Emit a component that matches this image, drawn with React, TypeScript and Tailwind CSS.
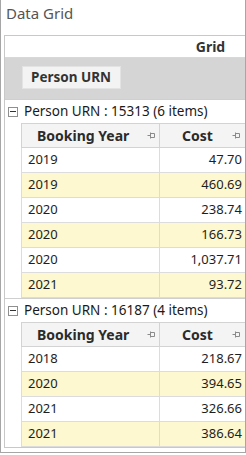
import React from "react";

type Row = { year: string; cost: string };

const groups: { urn: string; rows: Row[] }[] = [
  {
    urn: "15313",
    rows: [
      { year: "2019", cost: "47.70" },
      { year: "2019", cost: "460.69" },
      { year: "2020", cost: "238.74" },
      { year: "2020", cost: "166.73" },
      { year: "2020", cost: "1,037.71" },
      { year: "2021", cost: "93.72" },
    ],
  },
  {
    urn: "16187",
    rows: [
      { year: "2018", cost: "218.67" },
      { year: "2020", cost: "394.65" },
      { year: "2021", cost: "326.66" },
      { year: "2021", cost: "386.64" },
    ],
  },
];

const font = { fontFamily: '"Noto Sans", "Open Sans", sans-serif' };

const PinIcon = () => (
  <svg width="9" height="9" viewBox="0 0 9 9" className="shrink-0">
    <path d="M0.5 4.5H3.5M3.5 1.5V7.5M3.5 2.5H7.5V6.5H3.5" stroke="#8a8a8a" strokeWidth="1" fill="none" />
  </svg>
);

const Group = ({ urn, rows }: { urn: string; rows: Row[] }) => (
  <div>
    <div className="h-[24px] flex items-center border-t border-[#cfcfcf] w-[412px]">
      <div className="ml-[3px] w-[10px] h-[10px] border border-[#8f8f8f] bg-white flex items-center justify-center">
        <div className="w-[6px] h-px bg-[#333]" />
      </div>
      <span className="ml-[6px] text-[13.5px] text-[#1a1a1a] leading-none">
        Person URN : {urn} ({rows.length} items)
      </span>
    </div>
    <div className="ml-[16px]">
      <div className="flex h-[25px] bg-[#f4f4f4] border-t border-b border-l border-[#d3d3d3] text-[14px] font-bold text-[#2b2b2b]">
        <div className="w-[138px] flex items-center border-r border-[#d3d3d3]">
          <span className="pl-[15px]">Booking Year</span>
          <span className="ml-auto mr-[3px]">
            <PinIcon />
          </span>
        </div>
        <div className="w-[86px] flex items-center">
          <span className="pl-[22px]">Cost</span>
          <span className="ml-auto mr-[5px]">
            <PinIcon />
          </span>
        </div>
      </div>
      {rows.map((r, i) => (
        <div
          key={i}
          className={`flex h-[25px] border-b border-l border-[#dcdcdc] text-[13px] text-[#1e1e1e] ${
            i % 2 === 1 ? "bg-[#fdf8d0]" : "bg-white"
          }`}
        >
          <div className="w-[138px] flex items-center border-r border-[#dcdcdc] pl-[6px]">{r.year}</div>
          <div className="w-[86px] flex items-center justify-end pr-[4px]">{r.cost}</div>
        </div>
      ))}
    </div>
  </div>
);

export default function App() {
  return (
    <div className="w-[246px] h-[455px] bg-white" style={font}>
      <div className="w-[246px] h-[453px] border-l border-r border-b border-[#a6a6a6] overflow-hidden">
        <div className="h-[35px] pl-[5px] pt-[2px] text-[15px] text-[#555555]">Data Grid</div>
        <div className="ml-[3px] w-[412px] border-t border-l border-b border-[#c8c8c8] bg-white">
          <div className="h-[22px] flex items-center justify-center border-b border-[#d8d8d8] text-[14px] font-bold text-[#333]">
            Grid
          </div>
          <div className="h-[41px] bg-[#d5d5d5] pt-[8px] pl-[17px]">
            <div className="w-[99px] h-[23px] bg-[#f3f3f3] border border-[#e3e3e3] flex items-center pl-[8px] text-[13.5px] font-bold text-[#333]">
              Person URN
            </div>
          </div>
          {groups.map((g) => (
            <Group key={g.urn} urn={g.urn} rows={g.rows} />
          ))}
        </div>
      </div>
    </div>
  );
}
